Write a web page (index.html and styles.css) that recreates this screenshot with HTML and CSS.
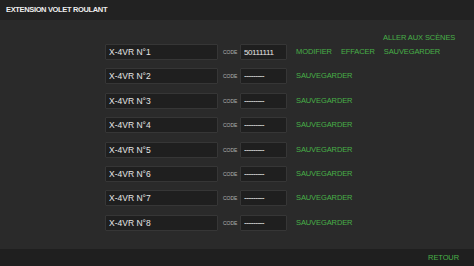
FILE: index.html
```html
<!DOCTYPE html>
<html>
<head>
  <title>Extension volet roulant</title>
  <link rel="stylesheet" href="styles.css">
</head>
<body>
  <div class="page">
    <div class="header">EXTENSION VOLET ROULANT</div>

    <div class="content">
      <div class="row">
        <input class="name" type="text" value="X-4VR N°1">
        <span class="code-label">CODE</span>
        <input class="code" type="text" value="50111111">
        <div class="actions">
          <a href="#">MODIFIER</a>
          <a href="#">EFFACER</a>
          <a href="#">SAUVEGARDER</a>
          <a href="#" class="scenes">ALLER AUX SCÈNES</a>
        </div>
      </div>
      <div class="row">
        <input class="name" type="text" value="X-4VR N°2">
        <span class="code-label">CODE</span>
        <input class="code empty" type="text" value="---------">
        <div class="actions"><a href="#">SAUVEGARDER</a></div>
      </div>
      <div class="row">
        <input class="name" type="text" value="X-4VR N°3">
        <span class="code-label">CODE</span>
        <input class="code empty" type="text" value="---------">
        <div class="actions"><a href="#">SAUVEGARDER</a></div>
      </div>
      <div class="row">
        <input class="name" type="text" value="X-4VR N°4">
        <span class="code-label">CODE</span>
        <input class="code empty" type="text" value="---------">
        <div class="actions"><a href="#">SAUVEGARDER</a></div>
      </div>
      <div class="row">
        <input class="name" type="text" value="X-4VR N°5">
        <span class="code-label">CODE</span>
        <input class="code empty" type="text" value="---------">
        <div class="actions"><a href="#">SAUVEGARDER</a></div>
      </div>
      <div class="row">
        <input class="name" type="text" value="X-4VR N°6">
        <span class="code-label">CODE</span>
        <input class="code empty" type="text" value="---------">
        <div class="actions"><a href="#">SAUVEGARDER</a></div>
      </div>
      <div class="row">
        <input class="name" type="text" value="X-4VR N°7">
        <span class="code-label">CODE</span>
        <input class="code empty" type="text" value="---------">
        <div class="actions"><a href="#">SAUVEGARDER</a></div>
      </div>
      <div class="row">
        <input class="name" type="text" value="X-4VR N°8">
        <span class="code-label">CODE</span>
        <input class="code empty" type="text" value="---------">
        <div class="actions"><a href="#">SAUVEGARDER</a></div>
      </div>
    </div>

    <div class="footer">
      <a href="#">RETOUR</a>
    </div>
  </div>
</body>
</html>
```

FILE: styles.css
```css
body {
  font-family: "Liberation Sans", Arial, sans-serif;
  margin: 0;
  padding: 0;
  background: #2a2a2a;
  color: #e6e6e6;
}

.page {
  height: 266px;
  display: flex;
  flex-direction: column;
}

.header {
  height: 20px;
  flex-shrink: 0;
  background: #222222;
  padding-left: 6px;
  font-size: 7.5px;
  font-weight: bold;
  letter-spacing: -0.35px;
  line-height: 20px;
  color: #eeeeee;
}

.content {
  flex: 1;
  display: flex;
  flex-direction: column;
  gap: 8.4px;
  padding: 24px 0 0 105px;
}

.row {
  display: flex;
  align-items: center;
  height: 16px;
}

input {
  box-sizing: border-box;
  height: 16px;
  margin: 0;
  background: #1f1f1f;
  border: 1px solid #363636;
  border-radius: 1px;
  color: #e6e6e6;
  font-family: "Liberation Sans", Arial, sans-serif;
  outline: none;
}

.name {
  width: 113px;
  padding: 0 3px;
  font-size: 8.5px;
}

.code-label {
  width: 17px;
  margin-left: 5px;
  font-size: 5px;
  color: #b0b0b0;
}

.code {
  width: 47px;
  padding: 0 3px;
  font-size: 8px;
  letter-spacing: -0.4px;
}

.code.empty {
  font-size: 8.5px;
  letter-spacing: -0.6px;
}

.actions {
  margin-left: 9px;
  height: 16px;
  flex: 1;
  display: flex;
  flex-wrap: wrap-reverse;
  align-items: center;
  column-gap: 9px;
}

.actions a,
.footer a {
  color: #48b048;
  text-decoration: none;
  font-size: 7.5px;
  letter-spacing: -0.1px;
  line-height: 16px;
}

.actions .scenes {
  margin-left: 87px;
  line-height: 12px;
}

.footer {
  height: 17px;
  flex-shrink: 0;
  background: #1f1f1f;
  display: flex;
  justify-content: flex-end;
  align-items: center;
  padding-right: 15px;
}
```
